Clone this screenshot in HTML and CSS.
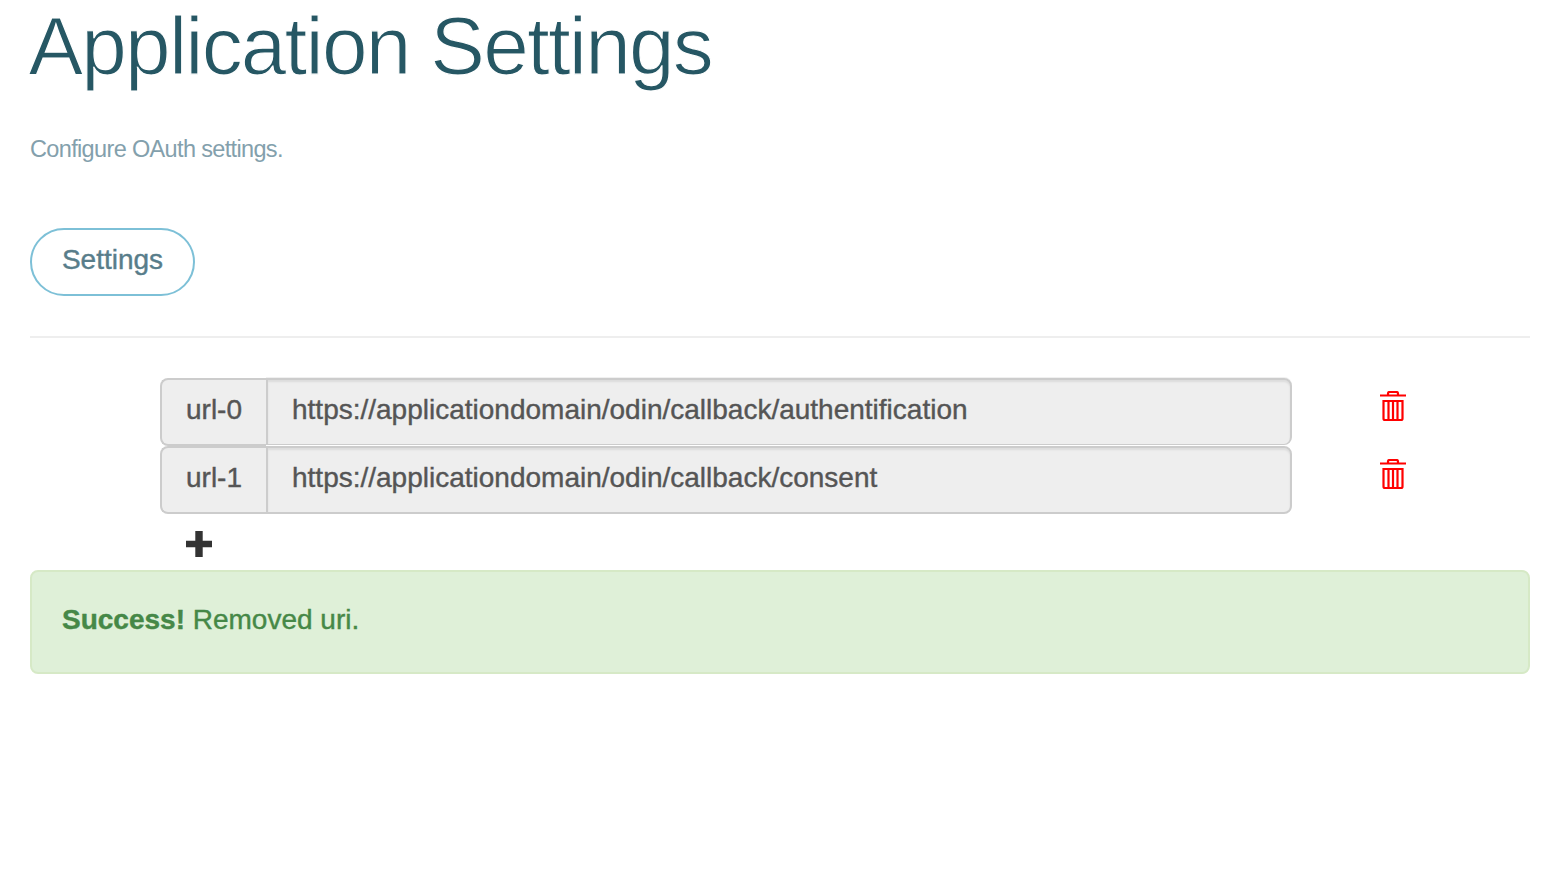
FILE: index.html
```html
<!DOCTYPE html>
<html lang="en">
<head>
<meta charset="utf-8">
<title>Application Settings</title>
<link rel="stylesheet" href="styles.css">
</head>
<body>
<main class="page">
  <h1 class="title">Application Settings</h1>
  <p class="lead">Configure OAuth settings.</p>
  <button class="tab">Settings</button>
  <hr class="rule">
  <div class="urls">
    <div class="row">
      <div class="group"><span class="addon">url-0</span><span class="field">https://applicationdomain/odin/callback/authentification</span></div>
      <svg class="trash" viewBox="0 0 26 31"><path d="M0 4.500h26M8 4V2.500Q8 1 9.500 1h7Q18 1 18 2.500V4M3.500 10v17.500Q3.500 29 5 29h16q1.500 0 1.500-1.500V10zM8.500 10v19M13 10v19M17.500 10v19"/></svg>
    </div>
    <div class="row">
      <div class="group"><span class="addon">url-1</span><span class="field">https://applicationdomain/odin/callback/consent</span></div>
      <svg class="trash" viewBox="0 0 26 31"><path d="M0 4.500h26M8 4V2.500Q8 1 9.500 1h7Q18 1 18 2.500V4M3.500 10v17.500Q3.500 29 5 29h16q1.500 0 1.500-1.500V10zM8.500 10v19M13 10v19M17.500 10v19"/></svg>
    </div>
  </div>
  <svg class="plus" viewBox="0 0 26 26"><path d="M9.300 0h7.400v9.700H26v6.600h-9.300V26H9.300v-9.700H0V9.700h9.300z"/></svg>
  <div class="alert"><strong>Success!</strong> Removed uri.</div>
</main>
</body>
</html>
```
FILE: styles.css
```css
* { box-sizing: border-box; }
body {
  margin: 0;
  background: #fff;
  font-family: "Liberation Sans", Arial, sans-serif;
  font-size: 28px;
  line-height: 40px;
}
.page { display: flex; flex-direction: column; padding: 0 30px; }
.title {
  margin: 0 0 0 -1.500px;
  height: 130px;
  font-size: 82px;
  line-height: 91px;
  font-weight: 400;
  letter-spacing: -1.84px;
  color: #265764;
  -webkit-text-stroke: 1.2px #fff;
}
.lead {
  margin: 0;
  height: 98px;
  padding-top: 4px;
  font-size: 23.5px;
  line-height: 30px;
  letter-spacing: -0.65px;
  color: #83a0ac;
}
.tab {
  width: 165px;
  height: 68px;
  padding: 0 0 5px;
  border: 2px solid #7dc0d7;
  border-radius: 34px;
  background: #fff;
  color: #587d8a;
  font: inherit;
  -webkit-text-stroke: .4px currentColor;
}
.rule {
  width: 100%;
  height: 2px;
  margin: 40px 0;
  border: 0;
  background: #eee;
}
.urls { padding-left: 130px; }
.row { display: flex; height: 68px; }
.group { display: flex; width: 1132px; }
.addon, .field {
  padding: 10px 24px 0;
  border: 2px solid #ccc;
  background: #eee;
  color: #555;
  -webkit-text-stroke: .4px currentColor;
}
.addon { width: 106px; border-right: 0; border-radius: 8px 0 0 8px; }
.field {
  flex: 1;
  border-radius: 0 8px 8px 0;
  box-shadow: inset 0 2px 2px rgba(0, 0, 0, .075);
}
.row:first-child .field {
  height: 67px;
  border-bottom-width: 1px;
  box-shadow: inset 0 2px 2px rgba(0, 0, 0, .075), 0 -1px 0 #f0f0f0;
}
.trash {
  width: 26px;
  height: 31px;
  margin: 13px 0 0 88px;
  fill: none;
  stroke: #f00;
  stroke-width: 2.2;
}
.plus { width: 26px; height: 26px; margin: 17px 0 13px 156px; fill: #333; }
.alert {
  height: 104px;
  padding: 28px 30px;
  border: 2px solid #d6e9c6;
  border-radius: 8px;
  background: #dff0d8;
  color: #468847;
  -webkit-text-stroke: .4px currentColor;
}
```
